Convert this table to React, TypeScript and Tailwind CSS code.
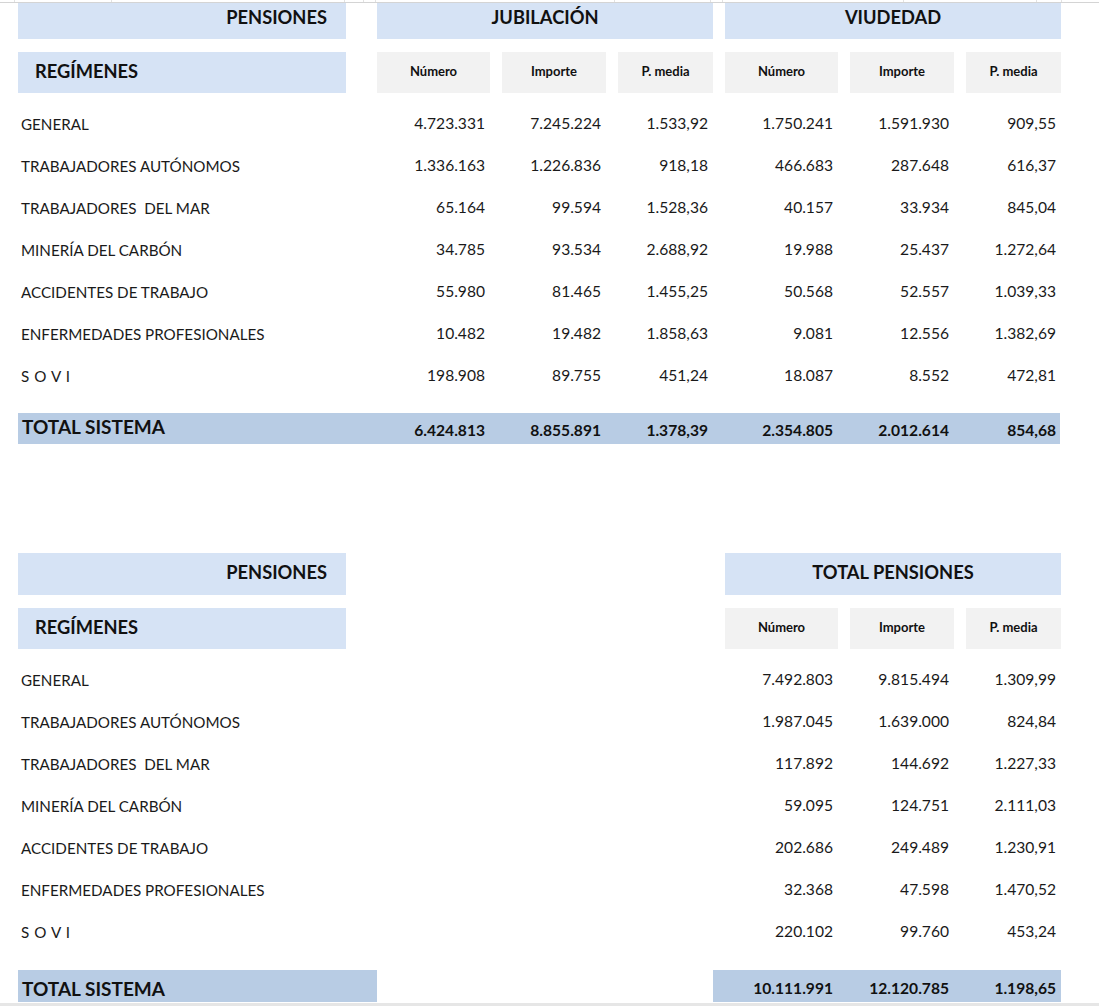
const font = { fontFamily: 'Lato, "Open Sans", sans-serif' }

const cols = 'grid grid-cols-[347px_113px_104px_95px_113px_104px_95px] gap-x-3'

const topRows: [string, string[]][] = [
  ['GENERAL', ['4.723.331', '7.245.224', '1.533,92', '1.750.241', '1.591.930', '909,55']],
  ['TRABAJADORES AUTÓNOMOS', ['1.336.163', '1.226.836', '918,18', '466.683', '287.648', '616,37']],
  ['TRABAJADORES  DEL MAR', ['65.164', '99.594', '1.528,36', '40.157', '33.934', '845,04']],
  ['MINERÍA DEL CARBÓN', ['34.785', '93.534', '2.688,92', '19.988', '25.437', '1.272,64']],
  ['ACCIDENTES DE TRABAJO', ['55.980', '81.465', '1.455,25', '50.568', '52.557', '1.039,33']],
  ['ENFERMEDADES PROFESIONALES', ['10.482', '19.482', '1.858,63', '9.081', '12.556', '1.382,69']],
  ['S O V I', ['198.908', '89.755', '451,24', '18.087', '8.552', '472,81']],
]

const bottomRows: [string, string[]][] = [
  ['GENERAL', ['7.492.803', '9.815.494', '1.309,99']],
  ['TRABAJADORES AUTÓNOMOS', ['1.987.045', '1.639.000', '824,84']],
  ['TRABAJADORES  DEL MAR', ['117.892', '144.692', '1.227,33']],
  ['MINERÍA DEL CARBÓN', ['59.095', '124.751', '2.111,03']],
  ['ACCIDENTES DE TRABAJO', ['202.686', '249.489', '1.230,91']],
  ['ENFERMEDADES PROFESIONALES', ['32.368', '47.598', '1.470,52']],
  ['S O V I', ['220.102', '99.760', '453,24']],
]

const subHeads = ['Número', 'Importe', 'P. media']

function SubHead({ label }: { label: string }) {
  return (
    <div className="h-[41px] bg-[#f2f2f2] flex items-center justify-center pb-[1px] text-[13px] font-bold text-[#111]">
      {label}
    </div>
  )
}

function Label({ text }: { text: string }) {
  return (
    <div className={`pl-[3px] text-[15.2px] text-[#1a1a1a] whitespace-pre ${text === 'S O V I' ? 'tracking-[0.6px]' : ''}`}>
      {text}
    </div>
  )
}

function Num({ v }: { v: string }) {
  return <div className="text-right pr-[5px] text-[15.6px] text-[#1a1a1a]">{v}</div>
}

const gridLines = [15, 112, 345, 364, 376, 615, 711, 723, 904, 1037, 1062]

export default function App() {
  return (
    <div className="w-[1099px] h-[1006px] bg-white overflow-hidden flex flex-col" style={font}>
      {/* hoja de cálculo: líneas de cuadrícula arriba */}
      <div className="h-[3px] border-b border-[#d4d4d4] flex">
        {gridLines.map((x, i) => (
          <div key={i} className="h-full border-r border-[#e2e2e2]" style={{ width: i === 0 ? x : x - gridLines[i - 1] }} />
        ))}
      </div>

      {/* primera tabla */}
      <div className="pl-[18px]">
        <div className={cols}>
          <div className="w-[328px] h-[36px] bg-[#d6e3f5] flex items-center justify-end pr-[19px] pb-[6px] text-[18.3px] font-bold text-[#111]">
            PENSIONES
          </div>
          <div className="col-span-3 h-[36px] bg-[#d6e3f5] flex items-center justify-center pb-[6px] text-[18.3px] font-bold text-[#111]">
            JUBILACIÓN
          </div>
          <div className="col-span-3 h-[36px] bg-[#d6e3f5] flex items-center justify-center pb-[6px] text-[18.3px] font-bold text-[#111]">
            VIUDEDAD
          </div>
        </div>

        <div className={`${cols} mt-[13px]`}>
          <div className="w-[328px] h-[41px] bg-[#d6e3f5] flex items-center pl-[17px] pb-[2px] text-[18.3px] font-bold text-[#111]">
            REGÍMENES
          </div>
          {[...subHeads, ...subHeads].map((h, i) => (
            <SubHead key={i} label={h} />
          ))}
        </div>

        <div className="mt-[10px] flex flex-col">
          {topRows.map(([label, vals]) => (
            <div key={label} className={`${cols} h-[42px] items-center`}>
              <Label text={label} />
              {vals.map((v, i) => (
                <Num key={i} v={v} />
              ))}
            </div>
          ))}
        </div>

        <div className={`${cols} mt-[16px] w-[1042px] h-[31px] bg-[#b8cce4] items-center text-[#111] font-bold`}>
          <div className="pl-[4px] pb-[3px] text-[19px]">TOTAL SISTEMA</div>
          {['6.424.813', '8.855.891', '1.378,39', '2.354.805', '2.012.614', '854,68'].map((v, i) => (
            <div key={i} className="text-right pr-[5px] pt-[4px] text-[15.6px]">{v}</div>
          ))}
        </div>
      </div>

      {/* segunda tabla */}
      <div className="pl-[18px] mt-[109px]">
        <div className={cols}>
          <div className="w-[328px] h-[42px] bg-[#d6e3f5] flex items-center justify-end pr-[19px] pb-[3px] text-[18.3px] font-bold text-[#111]">
            PENSIONES
          </div>
          <div className="col-span-3" />
          <div className="col-span-3 h-[42px] bg-[#d6e3f5] flex items-center justify-center pb-[3px] text-[18.3px] font-bold text-[#111]">
            TOTAL PENSIONES
          </div>
        </div>

        <div className={`${cols} mt-[13px]`}>
          <div className="w-[328px] h-[41px] bg-[#d6e3f5] flex items-center pl-[17px] pb-[2px] text-[18.3px] font-bold text-[#111]">
            REGÍMENES
          </div>
          <div className="col-span-3" />
          {subHeads.map((h, i) => (
            <SubHead key={i} label={h} />
          ))}
        </div>

        <div className="mt-[10px] flex flex-col">
          {bottomRows.map(([label, vals]) => (
            <div key={label} className={`${cols} h-[42px] items-center`}>
              <Label text={label} />
              <div className="col-span-3" />
              {vals.map((v, i) => (
                <Num key={i} v={v} />
              ))}
            </div>
          ))}
        </div>

        <div className="mt-[17px] flex h-[32px] text-[#111] font-bold">
          <div className="w-[359px] bg-[#b8cce4] flex items-end pl-[4px] text-[19px] leading-[26px]">TOTAL SISTEMA</div>
          <div className="ml-[336px] w-[348px] bg-[#b8cce4] grid grid-cols-[113px_104px_95px] gap-x-3 pl-[12px] items-end pb-[2px]">
            {['10.111.991', '12.120.785', '1.198,65'].map((v, i) => (
              <div key={i} className="text-right pr-[5px] text-[15.6px]">{v}</div>
            ))}
          </div>
        </div>
      </div>

      <div className="mt-auto h-[3px] bg-[#e6e6e6]" />
    </div>
  )
}
